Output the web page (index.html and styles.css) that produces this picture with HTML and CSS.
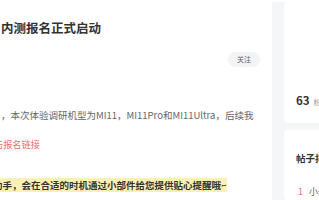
FILE: index.html
```html
<!DOCTYPE html>
<html lang="zh-CN">
<head>
<meta charset="utf-8">
<title>内测报名正式启动</title>
<link rel="stylesheet" href="styles.css">
</head>
<body>
<div class="page">
  <div class="topline"></div>
  <div class="layout">
    <main class="post">
      <h1 class="title">内测报名正式启动</h1>
      <div class="author-row"><button class="follow">关注</button></div>
      <p class="text">，本次体验调研机型为MI11，MI11Pro和MI11Ultra，后续我</p>
      <p class="link-line"><a class="link" href="#">击报名链接</a></p>
      <p class="tip"><span class="hl">助手，会在合适的时机通过小部件给您提供贴心提醒哦~</span></p>
    </main>
    <aside class="side">
      <section class="card stats">
        <div class="stat"><span class="num">63</span><span class="lbl">粉丝</span></div>
      </section>
      <section class="card rank">
        <h2 class="rank-title">帖子排行</h2>
        <ol class="rank-list">
          <li class="rank-item"><span class="idx">1</span><span class="rank-name">小米社区</span></li>
        </ol>
      </section>
    </aside>
  </div>
</div>
</body>
</html>
```
FILE: styles.css
```css
html, body {
  margin: 0;
  padding: 0;
}
body {
  width: 319px;
  height: 200px;
  overflow: hidden;
  background: #f5f6f8;
  font-family: "Noto Sans CJK SC", "Noto Sans", sans-serif;
}
.topline {
  height: 2px;
  background: #fff;
}
.layout {
  display: flex;
  gap: 12px;
  align-items: flex-start;
}
.post {
  flex: 0 0 272px;
  height: 198px;
  box-sizing: border-box;
  padding: 0 12px 0 1px;
  background: #fff;
  overflow: hidden;
  white-space: nowrap;
}
.title {
  margin: 16px 0 0;
  font-size: 12.5px;
  line-height: 19px;
  font-weight: 700;
  color: #333;
}
.author-row {
  display: flex;
  justify-content: flex-end;
  margin-top: 15px;
}
.follow {
  width: 32px;
  height: 15px;
  padding: 0;
  border: 0;
  border-radius: 8px;
  background: #f2f3f5;
  color: #666;
  font-family: inherit;
  font-size: 7px;
  line-height: 15px;
}
.text {
  margin: 41px 0 0;
  font-size: 9.5px;
  line-height: 14px;
  color: #666;
}
.link-line {
  margin: 15px 0 0 -7px;
  font-size: 9.2px;
  line-height: 14px;
}
.link {
  color: #f56c6c;
  text-decoration: none;
}
.tip {
  margin: 27px 0 0 -8px;
  font-size: 9.5px;
  line-height: 14px;
  font-weight: 700;
  color: #333;
}
.hl {
  background: #fdf0b4;
}
.side {
  flex: 0 0 200px;
  display: flex;
  flex-direction: column;
  gap: 7px;
}
.card {
  background: #fff;
  border-radius: 4px;
  padding-left: 12px;
  box-sizing: border-box;
}
.stats {
  height: 121px;
  padding-top: 89px;
}
.stat {
  line-height: 14px;
  white-space: nowrap;
}
.num {
  font-size: 11.5px;
  font-weight: 700;
  color: #333;
}
.lbl {
  margin-left: 4px;
  font-size: 7px;
  color: #999;
}
.rank {
  height: 70px;
  padding-top: 21px;
}
.rank-title {
  margin: 0;
  font-size: 9.5px;
  line-height: 14px;
  font-weight: 700;
  color: #333;
  white-space: nowrap;
}
.rank-list {
  margin: 20px 0 0;
  padding: 0 0 0 2px;
  list-style: none;
}
.rank-item {
  display: flex;
  gap: 6px;
  font-size: 9px;
  line-height: 14px;
  white-space: nowrap;
}
.idx {
  color: #f56c6c;
}
.rank-name {
  color: #666;
}
```
